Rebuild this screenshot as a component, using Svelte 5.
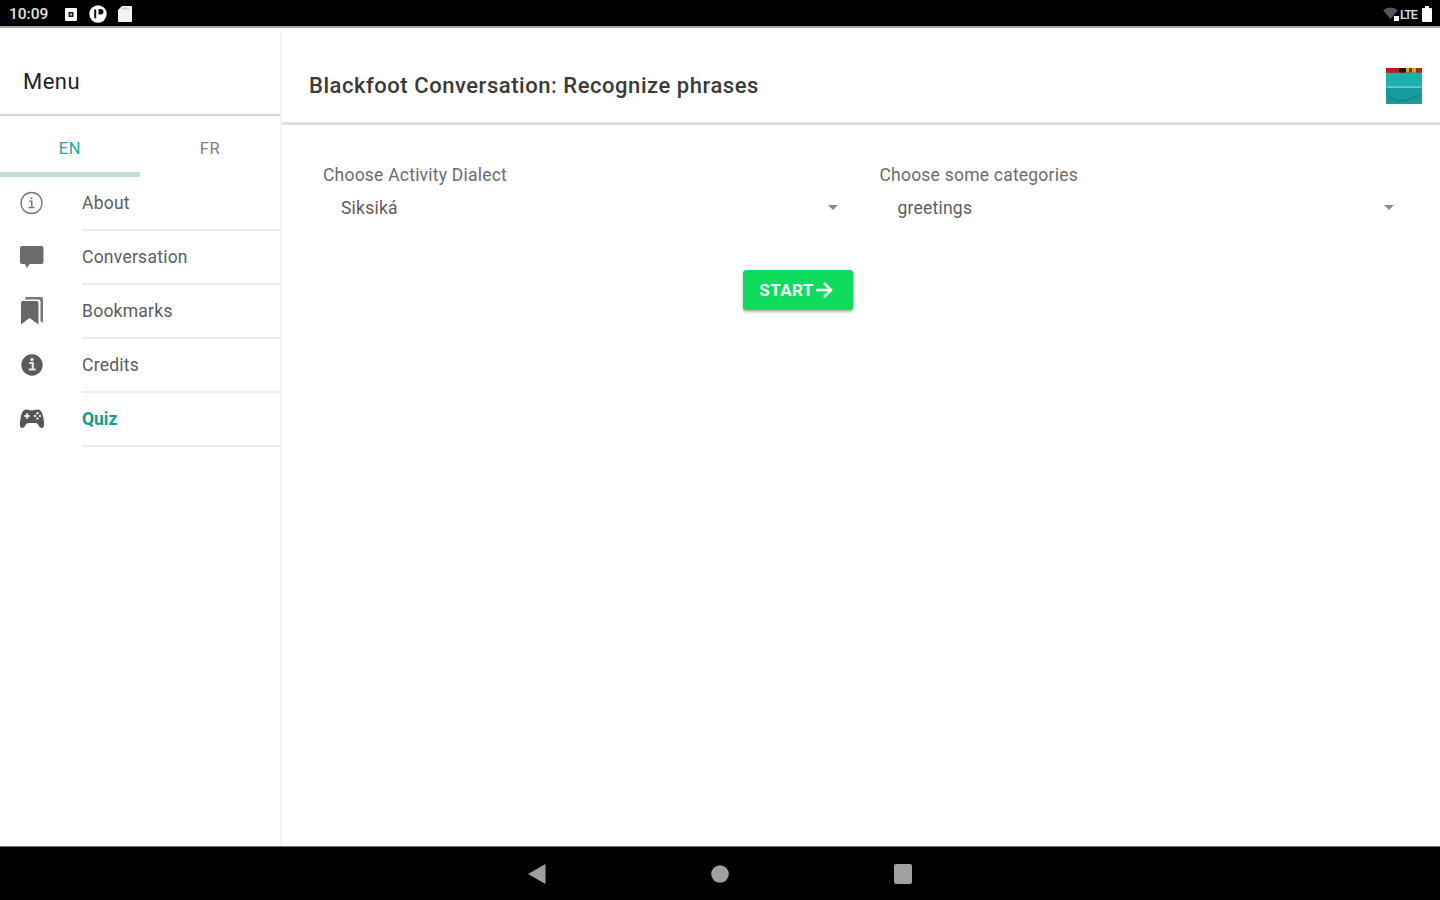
<script lang="ts">
  type IconName = "about" | "chat" | "bookmarks" | "info" | "game";

  const languages = ["EN", "FR"];
  const items: { label: string; icon: IconName }[] = [
    { label: "About", icon: "about" },
    { label: "Conversation", icon: "chat" },
    { label: "Bookmarks", icon: "bookmarks" },
    { label: "Credits", icon: "info" },
    { label: "Quiz", icon: "game" },
  ];
  const fields = [
    { label: "Choose Activity Dialect", value: "Siksiká" },
    { label: "Choose some categories", value: "greetings" },
  ];

  let language = $state("EN");
  let page = $state("Quiz");
</script>

<div class="device">
  <div class="status-bar">
    <span class="clock">10:09</span>
    <svg class="st-app" width="12" height="13" viewBox="0 0 12 13">
      <rect width="12" height="13" rx="1" fill="#fff" />
      <rect x="3.5" y="4" width="5" height="5" fill="#222" />
      <rect x="5" y="5.5" width="2" height="2" fill="#bbb" />
    </svg>
    <svg class="st-round" width="18" height="18" viewBox="0 0 18 18">
      <circle cx="9" cy="9" r="8.7" fill="#fff" />
      <path d="M5.2 4.5h2v9.5l-2-1.5zM9.5 4h2.2a2.4 2.4 0 0 1 0 5.5H9.5z" fill="#111" />
    </svg>
    <svg class="st-card" width="14" height="16" viewBox="0 0 14 16">
      <path d="M4 0h9a1 1 0 0 1 1 1v14a1 1 0 0 1-1 1H1a1 1 0 0 1-1-1V4z" fill="#f2f2f2" />
      <path d="M5 1.500v2M7.500 1.500v2M10 1.500v2" stroke="#999" />
    </svg>
    <span class="spacer"></span>
    <svg width="17" height="14" viewBox="0 0 17 14">
      <path d="M0 3.200a12 12 0 0 1 15 0L7.500 12z" fill="#555" />
      <rect x="11" y="9" width="5" height="5" fill="#fff" />
    </svg>
    <span class="lte">LTE</span>
    <svg class="st-battery" width="10" height="16" viewBox="0 0 10 16">
      <path d="M3 0h4v2h2a1 1 0 0 1 1 1v12a1 1 0 0 1-1 1H1a1 1 0 0 1-1-1V3a1 1 0 0 1 1-1h2z" fill="#fff" />
    </svg>
  </div>

  <div class="app">
    <nav class="menu">
      <h2>Menu</h2>
      <div class="tabs">
        {#each languages as lang}
          <button class="tab" class:active={language === lang} onclick={() => (language = lang)}>
            {lang}
          </button>
        {/each}
      </div>
      <ul>
        {#each items as item}
          <li>
            <svg class="icon" width="28" height="28" viewBox="0 0 28 28">
              {#if item.icon === "about"}
                <circle cx="13.500" cy="14" r="10.500" fill="none" stroke="#777" stroke-width="1.300" />
                <path d="M11.300 12.300h2.500v6M10.500 18.500h6" fill="none" stroke="#777" stroke-width="1.400" />
                <circle cx="13.500" cy="9.300" r="1.100" fill="#777" />
              {:else if item.icon === "chat"}
                <path
                  d="M4 3h19.500a2 2 0 0 1 2 2v14a2 2 0 0 1-2 2H11.500L9 25.200 7 21H4a2 2 0 0 1-2-2V5a2 2 0 0 1 2-2z"
                  fill="#6b6b6b"
                />
              {:else if item.icon === "bookmarks"}
                <path d="M7 2.500V1.500A1.500 1.500 0 0 1 8.500 0H23a2 2 0 0 1 2 2V26l-2.500-2V4.500a2 2 0 0 0-2-2z" fill="#777" />
                <path d="M4.500 4H18.500a2 2 0 0 1 2 2v21.500L11.500 21l-8.500 6.500V6a2 2 0 0 1 1.500-2z" fill="#666" />
              {:else if item.icon === "info"}
                <circle cx="14" cy="14" r="10.700" fill="#5b5b5b" />
                <path d="M11.200 12h3.600v6M10.800 18.500h7" fill="none" stroke="#e4e4e4" stroke-width="2.200" />
                <circle cx="14" cy="8.500" r="1.700" fill="#e4e4e4" />
              {:else}
                <path
                  d="M8.500 4.500c2 0 2.500 1 5.500 1s3.500-1 5.500-1c3 0 4.600 2.500 5.500 6.500.9 4.200 2.400 12-1.200 12-2.700 0-3.700-5-6-5h-7.600c-2.300 0-3.300 5-6 5-3.600 0-2.100-7.800-1.200-12 .9-4 2.500-6.500 5.500-6.500z"
                  fill="#555"
                />
                <path d="M9 8.300v5.400M6.300 11h5.400" stroke="#eee" stroke-width="1.900" />
                <g fill="#eee">
                  <circle cx="19.500" cy="8.300" r="1.200" />
                  <circle cx="22" cy="10.900" r="1.200" />
                  <circle cx="17" cy="10.900" r="1.200" />
                  <circle cx="19.500" cy="13.500" r="1.200" />
                </g>
              {/if}
            </svg>
            <button class="link" class:current={page === item.label} onclick={() => (page = item.label)}>
              <span>{item.label}</span>
            </button>
          </li>
        {/each}
      </ul>
    </nav>

    <main>
      <header>
        <h1>Blackfoot Conversation: Recognize phrases</h1>
        <svg class="logo" width="36" height="36" viewBox="0 0 36 36">
          <rect width="36" height="36" fill="#1bb0ac" />
          <rect y="20" width="36" height="16" fill="#159c9c" />
          <rect width="36" height="4.500" fill="#8c2a1c" />
          <rect width="13" height="4.500" fill="#c5171e" />
          <rect x="13" width="7" height="4.500" fill="#1b1712" />
          <rect x="20" width="3" height="4.500" fill="#d5a52a" />
          <rect x="26" width="4" height="4.500" fill="#c9a32c" />
          <rect x="31" width="5" height="4.500" fill="#bd211d" />
          <path d="M1 19.200h34" stroke="#6cc9c4" stroke-width="1.800" />
          <path d="M1 27l6 4 6 2 8-1 8-3 6-2" fill="none" stroke="#118a8d" stroke-width="2" />
        </svg>
      </header>

      <div class="fields">
        {#each fields as field}
          <div class="field">
            <span class="label">{field.label}</span>
            <div class="select">
              <span>{field.value}</span>
              <svg width="10" height="5" viewBox="0 0 10 5"><path d="M0 0h10L5 5z" fill="#8a8a8a" /></svg>
            </div>
          </div>
        {/each}
      </div>

      <div class="actions">
        <button class="start">
          <span>START</span>
          <svg width="17" height="18" viewBox="0 0 17 18">
            <path d="M0 9h15M8 2l7 7-7 7" fill="none" stroke="#fff" stroke-width="2.600" />
          </svg>
        </button>
      </div>
    </main>
  </div>

  <div class="nav-bar">
    <svg width="18" height="20" viewBox="0 0 18 20"><path d="M0 10L17.500 0v20z" fill="#a0a0a0" /></svg>
    <svg width="18" height="18" viewBox="0 0 18 18"><circle cx="9" cy="9" r="8.800" fill="#a0a0a0" /></svg>
    <svg width="18" height="20" viewBox="0 0 18 20"><rect width="18" height="20" rx="2" fill="#a0a0a0" /></svg>
  </div>
</div>

<style>
  :global(body) {
    margin: 0;
    background: #fff;
  }

  .device {
    display: flex;
    flex-direction: column;
    width: 1440px;
    height: 900px;
    overflow: hidden;
    font-family: Roboto, "Liberation Sans", sans-serif;
    color: #5c5c5c;
  }

  button {
    font: inherit;
    color: inherit;
    background: none;
    border: none;
    padding: 0;
    cursor: pointer;
  }

  svg {
    display: block;
    flex-shrink: 0;
  }

  .status-bar {
    display: flex;
    align-items: center;
    box-sizing: border-box;
    height: 28px;
    padding: 2px 8px 0 9px;
    border-bottom: 2px solid #a5a5a5;
    background: #000;
    color: #e0e0e0;
    font-size: 15.5px;
    font-weight: 500;
  }

  .clock {
    width: 56px;
  }

  .st-round {
    margin-left: 12px;
  }

  .st-card {
    margin-left: 11px;
  }

  .spacer {
    flex: 1;
  }

  .lte {
    width: 22px;
    font-size: 12.5px;
    letter-spacing: -1px;
  }

  .app {
    display: flex;
    flex: 1;
    min-height: 0;
  }

  .menu {
    box-sizing: border-box;
    width: 282px;
    margin-top: 4px;
    border-right: 2px solid #f3f3f3;
  }

  h2 {
    box-sizing: border-box;
    height: 84px;
    margin: 0;
    padding: 36px 23px 0;
    border-bottom: 2px solid #d6d6d6;
    color: #222;
    font-size: 22px;
    line-height: 28px;
    font-weight: 400;
    letter-spacing: 0.5px;
  }

  .tabs {
    display: flex;
    height: 61px;
  }

  .tab {
    flex: 1;
    box-sizing: border-box;
    padding-top: 8px;
    border-bottom: 5px solid transparent;
    font-size: 16.5px;
    letter-spacing: 0.6px;
    color: #808080;
  }

  .tab.active {
    border-bottom-color: #c2dcd6;
    color: #26a69a;
  }

  ul {
    margin: 0;
    padding: 0;
    list-style: none;
  }

  li {
    display: flex;
    height: 54px;
  }

  .icon {
    margin: 12px 36px 0 18px;
  }

  .link {
    flex: 1;
    border-bottom: 2px solid #ebebeb;
    font-size: 17.5px;
    letter-spacing: 0.25px;
    text-align: left;
  }

  .link span {
    display: block;
    margin-top: -1px;
  }

  .link.current {
    color: #109c90;
    font-weight: 700;
    letter-spacing: 0;
  }

  main {
    flex: 1;
  }

  header {
    display: flex;
    align-items: center;
    justify-content: space-between;
    box-sizing: border-box;
    height: 97px;
    padding: 21px 18px 0 27px;
    border-bottom: 3px solid #dedede;
  }

  h1 {
    margin: 0;
    color: #3a3a3a;
    font-size: 22px;
    font-weight: 500;
    letter-spacing: 0.54px;
  }

  .fields {
    display: flex;
    padding: 39px 22px 0 23px;
  }

  .field {
    flex: 1;
    padding: 0 18px;
    font-size: 17.5px;
    letter-spacing: 0.22px;
  }

  .label {
    display: block;
    line-height: 22px;
    color: #6c6c6c;
  }

  .select {
    display: flex;
    align-items: center;
    justify-content: space-between;
    height: 43px;
    padding: 0 6px 0 18px;
  }

  .actions {
    padding: 41px 0 0 461px;
  }

  .start {
    display: flex;
    align-items: center;
    justify-content: center;
    gap: 2px;
    box-sizing: border-box;
    width: 110px;
    height: 40px;
    padding: 0 4px 1px 0;
    border-radius: 3px;
    background: #0fdc5c;
    box-shadow: 0 2px 3px rgba(0, 0, 0, 0.3);
    color: #fff;
    font-size: 17px;
    font-weight: 700;
    letter-spacing: 0.4px;
  }

  .nav-bar {
    display: flex;
    align-items: center;
    justify-content: space-between;
    box-sizing: border-box;
    height: 54px;
    padding: 0 528px;
    border-top: 1px solid #777;
    background: #000;
  }
</style>
